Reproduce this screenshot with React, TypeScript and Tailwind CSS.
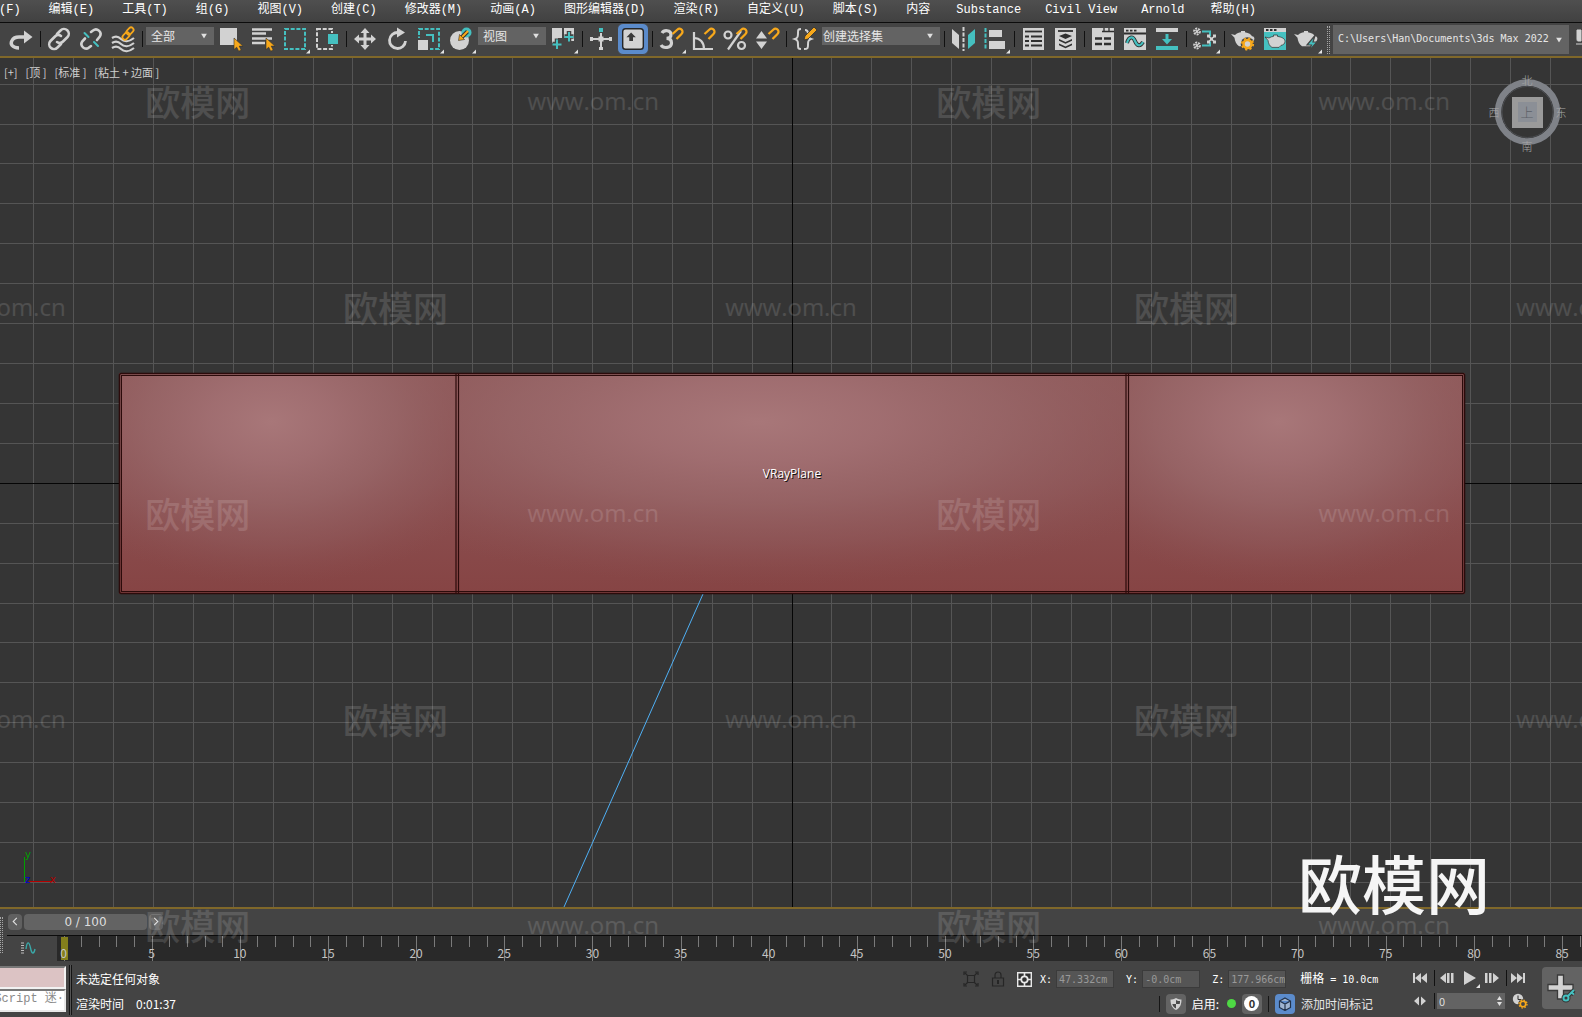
import { useState } from "react";
import type { ReactNode } from "react";
import clsx from "clsx";

const MENUS = [
  "文件(F)",
  "编辑(E)",
  "工具(T)",
  "组(G)",
  "视图(V)",
  "创建(C)",
  "修改器(M)",
  "动画(A)",
  "图形编辑器(D)",
  "渲染(R)",
  "自定义(U)",
  "脚本(S)",
  "内容",
  "Substance",
  "Civil View",
  "Arnold",
  "帮助(H)",
];

const LIGHT = "#d2d2d2";
const TEAL = "#45c0c0";
const ORANGE = "#f7a81b";
const DARK = "#2f2f2f";

const CURSOR = "M19 15v11.500l2.700-2.300 2 4 2.500-1.200-2-3.900h3.700z";
const MAGNET = "M17.500 11l5-4.500a3 3 0 0 1 4 4.500l-5 5";

const ICONS: Record<string, ReactNode> = {
  redo: (
    <>
      <path d="M14 25c-7 0-9-4-7-7.500C8.500 14.500 11 14 14 14h6" fill="none" stroke={LIGHT} strokeWidth="3.400" />
      <path d="M19 7.500l8.500 6.500-8.500 6.500z" fill={LIGHT} />
    </>
  ),
  link: (
    <g fill="none" stroke={LIGHT} strokeWidth="2.600" strokeLinecap="round">
      <path d="M14 11l3.500-3.500a4.600 4.600 0 0 1 7 6.500L20 18.500a4.600 4.600 0 0 1-6 .500" />
      <path d="M18 21l-3.500 3.500a4.600 4.600 0 0 1-7-6.500L12 13.500a4.600 4.600 0 0 1 6-.500" />
    </g>
  ),
  unlink: (
    <g fill="none" strokeWidth="2.600" strokeLinecap="round">
      <path d="M16 9l2-1.500a4.600 4.600 0 0 1 6.800 6L22 17M16 23l-2 1.500a4.600 4.600 0 0 1-6.800-6L10 15.500" stroke={LIGHT} />
      <path d="M9.500 10l4 4M19 19l4 4" stroke={TEAL} strokeWidth="2" />
    </g>
  ),
  bind: (
    <>
      <g fill="none" stroke={LIGHT} strokeWidth="2.200">
        <path d="M5 15c3-2 6-2 9 1s8 3 13-1" />
        <path d="M5 20c3-2 6-2 9 1s8 3 13-1" />
        <path d="M5 25c3-2 6-2 9 1s8 3 13-1" />
      </g>
      <g fill="none" stroke={ORANGE} strokeWidth="1.800">
        <rect x="19" y="5.500" width="8" height="5" rx="2.500" transform="rotate(-45 23 8)" />
        <rect x="15" y="10.500" width="8" height="5" rx="2.500" transform="rotate(-45 19 13)" />
      </g>
    </>
  ),
  selectObject: (
    <>
      <rect x="5" y="5" width="17" height="17" fill={LIGHT} />
      <path d={CURSOR} fill={ORANGE} stroke={DARK} strokeWidth=".6" />
    </>
  ),
  selectByName: (
    <>
      <path d="M5 6.500h20M5 10.500h14M5 15.500h20M5 20h13" stroke={LIGHT} strokeWidth="2.400" />
      <path d={CURSOR} fill={ORANGE} stroke={DARK} strokeWidth=".6" />
    </>
  ),
  rectRegion: <rect x="6" y="6" width="20" height="20" fill="none" stroke={TEAL} strokeWidth="2" strokeDasharray="4 1.700" />,
  windowCrossing: (
    <>
      <rect x="6" y="6" width="15" height="20" fill="none" stroke={LIGHT} strokeWidth="2" strokeDasharray="4 1.700" />
      <rect x="16" y="10" width="12" height="12" fill="#444" />
      <rect x="17" y="11" width="10" height="10" fill={TEAL} />
    </>
  ),
  move: (
    <>
      <path d="M16 8v16M8 16h16" stroke={LIGHT} strokeWidth="3" />
      <path d="M16 5l4.500 5h-9zM16 27l4.500-5h-9zM5 16l5-4.500v9zM27 16l-5-4.500v9z" fill={LIGHT} />
    </>
  ),
  rotate: (
    <>
      <path d="M17 9.500a8 8 0 1 0 7.500 8.500" fill="none" stroke={LIGHT} strokeWidth="2.800" />
      <path d="M16 4.500l8 5-8 5z" fill={LIGHT} />
    </>
  ),
  scale: (
    <>
      <rect x="6" y="6" width="20" height="20" fill="none" stroke={TEAL} strokeWidth="2" strokeDasharray="4 1.700" />
      <rect x="4" y="15" width="13" height="13" fill="#444" />
      <rect x="5" y="17" width="10" height="10" fill={LIGHT} />
      <path d="M13 12h7v7" fill="none" stroke={TEAL} strokeWidth="2" />
    </>
  ),
  place: (
    <>
      <circle cx="14.500" cy="17.500" r="9.500" fill={LIGHT} />
      <circle cx="21.500" cy="9.500" r="5" fill={TEAL} />
      <path d="M22.500 8.500l-6.500 6.500" stroke={DARK} strokeWidth="4" />
      <path d="M23 8l-7 7" stroke={ORANGE} strokeWidth="2.200" />
      <path d="M13.500 17.500l1-6 5 5z" fill={ORANGE} stroke={DARK} strokeWidth=".6" />
    </>
  ),
  pivot: (
    <>
      <path d="M5 5h10v10h-4v5H5zM17 5h10v13h-4v-3h-6z" fill={LIGHT} />
      <path d="M10 15.500v11M5.500 21h9M22 8v11M17.500 13.500h9" stroke="#444" strokeWidth="4.500" />
      <path d="M10 16.500v9.500M5.500 21.500h9M22 9v9.500M17.500 14h9" stroke={TEAL} strokeWidth="2" />
    </>
  ),
  manipulate: (
    <>
      <path d="M16 10v17M7 16h18" stroke={LIGHT} strokeWidth="2" />
      <rect x="14" y="5" width="4" height="4" fill={TEAL} />
      <path d="M5 14h3v4H5zM24 14h3v4h-3zM14 24h4v3h-4zM13.500 13.500h5v5h-5z" fill={LIGHT} />
    </>
  ),
  override: (
    <>
      <rect x="5" y="5" width="22" height="22" rx="3" fill={LIGHT} stroke="#262626" strokeWidth="1.500" />
      <path d="M14 9l5 5h-3v4h-4v-4H9z" fill="#3a3a3a" />
    </>
  ),
  snap: (
    <>
      <path d="M7 10c2-3.500 9-3 9 1.500 0 2.500-2 3.800-4.500 3.800 3 0 5 1.700 5 4.700 0 5-8 6-10.500 2" fill="none" stroke={LIGHT} strokeWidth="3.200" />
      <path d={MAGNET} fill="none" stroke={ORANGE} strokeWidth="2.300" />
    </>
  ),
  angleSnap: (
    <>
      <path d="M7 9v17h19" fill="none" stroke={LIGHT} strokeWidth="2.200" />
      <path d="M7 15c6 0 10 4.500 10 11" fill="none" stroke={LIGHT} strokeWidth="2.200" />
      <path d={MAGNET} fill="none" stroke={ORANGE} strokeWidth="2.300" />
    </>
  ),
  percentSnap: (
    <>
      <circle cx="9" cy="12" r="3.500" fill="none" stroke={LIGHT} strokeWidth="2.200" />
      <circle cx="22.500" cy="22.500" r="3.500" fill="none" stroke={LIGHT} strokeWidth="2.200" />
      <path d="M22 8L9 26.500" stroke={LIGHT} strokeWidth="2.200" />
      <path d={MAGNET} fill="none" stroke={ORANGE} strokeWidth="2.300" />
    </>
  ),
  spinnerSnap: (
    <>
      <path d="M10.500 8l5.500 7.500H5zM10.500 26L5 18.500h11z" fill={LIGHT} />
      <path d={MAGNET} fill="none" stroke={ORANGE} strokeWidth="2.300" />
    </>
  ),
  namedSets: (
    <>
      <path d="M12 6c-3 0-3 1-3 4s0 5-3 6c3 1 3 3 3 6s0 4 3 4" fill="none" stroke={LIGHT} strokeWidth="2" />
      <path d="M16 7c3 0 3 2 3 4s0 4 3 5c-3 1-3 3-3 6s0 4-4 4" fill="none" stroke={LIGHT} strokeWidth="2" />
      <path d="M15 17l1-4 9-9 3 3-9 9z" fill={ORANGE} stroke={DARK} strokeWidth=".8" />
    </>
  ),
  mirror: (
    <>
      <path d="M5 6l7 6v14l-7-6z" fill={LIGHT} />
      <path d="M16.500 4v24" stroke={LIGHT} strokeWidth="2" strokeDasharray="4 1.500" />
      <path d="M28 6l-7 6v14l7-6z" fill={TEAL} />
    </>
  ),
  align: (
    <>
      <path d="M6.500 5v22" stroke={TEAL} strokeWidth="2" strokeDasharray="4 1.500" />
      <path d="M10 7h13v7H10zM10 18h16v8H10z" fill={LIGHT} />
    </>
  ),
  sceneExplorer: (
    <>
      <rect x="6" y="5" width="21" height="22" fill={LIGHT} />
      <path d="M8 8.500h17" stroke={DARK} strokeWidth="1.800" />
      <path d="M8 13.500h4M14 13.500h11M8 18h4M14 18h11M8 22.500h4M14 22.500h11" stroke={DARK} strokeWidth="2" />
    </>
  ),
  layerExplorer: (
    <>
      <rect x="6" y="5" width="21" height="22" fill={LIGHT} />
      <path d="M9 8h15" stroke={DARK} strokeWidth="1.800" />
      <path d="M16.500 10.500l6.500 2.500-6.500 3-6.500-3zM10 16l6.500 3 6.500-3v1.800l-6.500 3-6.500-3zM10 20.500l6.500 3 6.500-3v1.800l-6.500 3-6.500-3z" fill={DARK} />
    </>
  ),
  ribbon: (
    <>
      <rect x="5" y="5" width="22" height="22" fill={LIGHT} />
      <path d="M15 8.500h12M17 5v3M22 5v3" stroke={DARK} strokeWidth="1.300" />
      <path d="M8 15.500h7M17 15.500h7M8 21h7M17 21h7" stroke={DARK} strokeWidth="2.600" />
    </>
  ),
  curveEditor: (
    <>
      <rect x="5" y="5" width="22" height="22" fill={LIGHT} />
      <path d="M5 10.500h22M7 7.700h2.500M11 7.700h2.500M15 7.700h2.500" stroke={DARK} strokeWidth="1.800" />
      <path d="M8 20c2-7 6-7 8-2s5 6 8 1" fill="none" stroke={DARK} strokeWidth="4" />
      <path d="M8 20c2-7 6-7 8-2s5 6 8 1" fill="none" stroke={TEAL} strokeWidth="2.200" />
    </>
  ),
  dopeSheet: (
    <>
      <rect x="5" y="5" width="22" height="4" fill={LIGHT} />
      <path d="M14.500 11h3v5H21l-5 5.500-5-5.500h3.500zM5 23h22v4H5z" fill={TEAL} />
    </>
  ),
  schematic: (
    <>
      <path d="M13 8.500h8v5M13 22.500h8v-4" fill="none" stroke={TEAL} strokeWidth="2" />
      <g fill="none" stroke={LIGHT} strokeWidth="1.800" strokeDasharray="2 1">
        <circle cx="8" cy="8.500" r="3" />
        <circle cx="8" cy="22.500" r="3" />
      </g>
      <path d="M6.500 7l3 3M9.500 7l-3 3M6.500 21l3 3M9.500 21l-3 3M19.500 13l6 6M25.500 13l-6 6" stroke={LIGHT} strokeWidth="1.500" />
      <path d="M18 11.500h3v3h-3zM24 11.500h3v3h-3zM18 17.500h3v3h-3zM24 17.500h3v3h-3zM21 14.500h3v3h-3z" fill={LIGHT} />
    </>
  ),
  renderSetup: (
    <>
      <path d="M4 11l4 1c2-2 4-2.500 6-2.800V8h4v1.200c4 .8 6 2 7 4 2 0 3 2 2 4l-4 6H12c-3-2-4-5-4.500-8.500z" fill={LIGHT} />
      <circle cx="20.500" cy="21" r="6.800" fill="#444" />
      <circle cx="20.500" cy="21" r="4" fill={LIGHT} stroke={ORANGE} strokeWidth="2.600" />
      <circle cx="20.500" cy="21" r="5.700" fill="none" stroke={ORANGE} strokeWidth="1.800" strokeDasharray="2.200 2.280" />
    </>
  ),
  renderFrame: (
    <>
      <rect x="5" y="5" width="22" height="22" fill={TEAL} />
      <path d="M5 5h22v4H5z" fill={LIGHT} />
      <path d="M7 7h2.500M11 7h2.500M15 7h2.500" stroke={DARK} strokeWidth="1.800" />
      <path d="M6 14l4 1c1.500-1 3-1.500 4.500-1.600v-1.400h4v1.400c4 .6 7.500 2 7.500 5 0 2.500-2 3.600-4 4l-2 2h-7c-3-1.500-3.500-4.500-4-7z" fill={LIGHT} stroke={DARK} strokeWidth=".7" />
    </>
  ),
  render: (
    <>
      <path d="M3 11l4 1c2-2 4-2.500 6-2.800V8h4v1.200c4 .8 6 2 7 4 2 0 3 2 2 4l-4 6H11c-3-2-4-5-4.500-8.500z" fill={LIGHT} />
      <path d="M24 12.500l-8 9.500h4.500l-3 6.500 8.500-9.500h-4z" fill={TEAL} stroke="#444" strokeWidth="1.200" />
    </>
  ),
};

type ToolProps = {
  icon: string;
  label: string;
  flyout?: boolean;
  active?: boolean;
};

function Tool({ icon, label, flyout, active }: ToolProps) {
  return (
    <button
      type="button"
      aria-label={label}
      className={clsx("h-8 w-8 shrink-0", active && "rounded-md border border-[#444] bg-[#5b8bcb]")}
    >
      <svg viewBox="0 0 32 32" className="h-full w-full">
        {ICONS[icon]}
        {flyout && <path d="M31 26.500v4h-4z" fill="#e4e4e4" />}
      </svg>
    </button>
  );
}

function Separator() {
  return (
    <div className="flex h-8 w-[6px] shrink-0 items-center justify-center">
      <div className="h-4 w-px bg-[#111]" />
    </div>
  );
}

type DropDownProps = {
  label: string;
  options: string[];
  className: string;
  inset?: string;
};

function DropDown({ label, options, className, inset = "pl-[5px]" }: DropDownProps) {
  return (
    <div className={clsx("relative mx-px shrink-0", className)}>
      <select
        aria-label={label}
        className={clsx(
          "block h-full w-full appearance-none bg-[#636363] pb-px pr-5 text-[#e6e6e6] outline-none",
          inset,
        )}
      >
        {options.map((option) => (
          <option key={option}>{option}</option>
        ))}
      </select>
      <svg viewBox="0 0 6 5" className="pointer-events-none absolute right-[7px] top-1/2 h-[5px] w-[6px] -translate-y-1/2">
        <path d="M0 0h6L3 5z" fill="#e0e0e0" />
      </svg>
    </div>
  );
}

function MenuBar() {
  return (
    <nav className="h-[23px] overflow-hidden border-b border-[#0c0c0c] bg-linear-to-b from-[#4f4f4f] to-[#414141] font-['Liberation_Mono','Noto_Sans_CJK_SC',monospace] text-xs text-white">
      <div className="-ml-[39px] flex h-5 items-center">
        {MENUS.map((menu) => (
          <button
            key={menu}
            type="button"
            className={clsx("shrink-0 whitespace-nowrap", /^[A-Z]/.test(menu) ? "px-3" : "px-[14px]")}
          >
            {menu}
          </button>
        ))}
      </div>
    </nav>
  );
}

function Toolbar() {
  return (
    <div className="flex h-[33px] items-start overflow-hidden bg-[#444] pl-[5px] font-['Noto_Sans_CJK_SC',sans-serif] text-xs">
      <Tool icon="redo" label="重做" />
      <Separator />
      <Tool icon="link" label="选择并链接" />
      <Tool icon="unlink" label="取消链接" />
      <Tool icon="bind" label="绑定到空间扭曲" />
      <Separator />
      <DropDown label="选择过滤器" options={["全部", "几何体", "灯光"]} className="mt-1 h-[18px] w-[68px]" />
      <Tool icon="selectObject" label="选择对象" />
      <Tool icon="selectByName" label="按名称选择" />
      <Tool icon="rectRegion" label="矩形选择区域" flyout />
      <Tool icon="windowCrossing" label="窗口/交叉" />
      <Separator />
      <Tool icon="move" label="选择并移动" />
      <Tool icon="rotate" label="选择并旋转" />
      <Tool icon="scale" label="选择并缩放" flyout />
      <Tool icon="place" label="选择并放置" flyout />
      <DropDown label="参考坐标系" options={["视图", "屏幕", "世界"]} className="mt-1 h-[18px] w-[68px]" />
      <Tool icon="pivot" label="使用轴点中心" flyout />
      <Separator />
      <Tool icon="manipulate" label="选择并操纵" />
      <Tool icon="override" label="键盘快捷键覆盖切换" active />
      <Separator />
      <Tool icon="snap" label="捕捉开关" flyout />
      <Tool icon="angleSnap" label="角度捕捉切换" />
      <Tool icon="percentSnap" label="百分比捕捉切换" />
      <Tool icon="spinnerSnap" label="微调器捕捉切换" />
      <Separator />
      <Tool icon="namedSets" label="编辑命名选择集" />
      <DropDown label="命名选择集" options={["创建选择集"]} className="mt-1 h-[18px] w-[118px]" inset="pl-px" />
      <Separator />
      <Tool icon="mirror" label="镜像" />
      <Tool icon="align" label="对齐" flyout />
      <Separator />
      <Tool icon="sceneExplorer" label="切换场景资源管理器" />
      <Tool icon="layerExplorer" label="切换层资源管理器" />
      <Separator />
      <Tool icon="ribbon" label="显示功能区" />
      <Tool icon="curveEditor" label="曲线编辑器" />
      <Tool icon="dopeSheet" label="摄影表" />
      <Separator />
      <Tool icon="schematic" label="图解视图" flyout />
      <Separator />
      <Tool icon="renderSetup" label="渲染设置" />
      <Tool icon="renderFrame" label="渲染帧窗口" />
      <Tool icon="render" label="渲染产品" flyout />
      <div className="ml-1 mr-[2px] mt-[3px] h-7 w-[3px] shrink-0 border-x border-dotted border-[#a5a5a5]" />
      <DropDown
        label="项目文件夹"
        options={["C:\\Users\\Han\\Documents\\3ds Max 2022"]}
        className="mt-[2px] h-[29px] w-[236px] font-['DejaVu_Sans_Mono',monospace] text-[10px]"
      />
      <button type="button" aria-label="设置项目" className="ml-1 mt-1 h-6 w-6 shrink-0">
        <svg viewBox="0 0 24 24">
          <path d="M3 3h4v11H4c-1 0-1-1-1-2zM2 17h6" stroke={LIGHT} fill={LIGHT} />
        </svg>
      </button>
    </div>
  );
}

const CENTER = { x: 792.05, y: 425.3 };
const GRID_STEP = 39.92;
const GRID_STEPS = Array.from({ length: 41 }, (_, i) => i - 20).filter((n) => n !== 0);

const PLANES = [
  { x: 119, width: 338 },
  { x: 457, width: 670 },
  { x: 1127, width: 338 },
];

function ViewCube() {
  return (
    <g className="font-['Noto_Sans_CJK_SC',sans-serif] text-[11px]" textAnchor="middle">
      <circle cx="1527.500" cy="54" r="29.500" fill="none" stroke="#7f8288" strokeWidth="6.500" />
      <circle cx="1527.500" cy="54" r="25.500" fill="#353535" stroke="#4b4d51" />
      <rect x="1512" y="39" width="31" height="31" fill="#9a9a9a" />
      <rect x="1518" y="44" width="19" height="20" fill="#8b8f96" />
      <text x="1527" y="59" fill="#5c5f66" className="text-[13px] font-light">
        上
      </text>
      <g fill="#a8a8a8" className="font-light">
        <text x="1527" y="27">北</text>
        <text x="1527" y="93">南</text>
        <text x="1494" y="59">西</text>
        <text x="1561" y="59">东</text>
      </g>
    </g>
  );
}

function Viewport() {
  return (
    <main className="relative min-h-0 flex-1 overflow-hidden border-y-2 border-[#80682a] bg-[#353535]">
      <svg viewBox="0 0 1582 849" preserveAspectRatio="xMidYMid slice" className="block h-full w-full">
        <defs>
          <linearGradient id="clay" x1="0" y1="0" x2="0" y2="1">
            <stop offset="0" stopColor="#8f5a5a" />
            <stop offset=".5" stopColor="#8c5152" />
            <stop offset="1" stopColor="#864444" />
          </linearGradient>
          <radialGradient id="glow" cx=".45" cy=".22" r=".74">
            <stop offset="0" stopColor="#a87779" />
            <stop offset=".25" stopColor="#a27073" stopOpacity=".9" />
            <stop offset=".5" stopColor="#99686a" stopOpacity=".75" />
            <stop offset=".75" stopColor="#925e60" stopOpacity=".45" />
            <stop offset="1" stopColor="#8c5253" stopOpacity="0" />
          </radialGradient>
        </defs>

        <g stroke="#555" shapeRendering="crispEdges">
          {GRID_STEPS.map((n) => (
            <path key={n} d={`M${Math.floor(CENTER.x + n * GRID_STEP) + 0.5} 0V849`} />
          ))}
          {GRID_STEPS.filter((n) => Math.abs(n) < 11).map((n) => (
            <path key={n} d={`M0 ${Math.floor(CENTER.y + n * GRID_STEP) + 0.5}H1582`} />
          ))}
          <path d="M792.5 0V849M0 425.5H1582" stroke="#050505" />
        </g>

        <path d="M703 536L564 849" stroke="#4fb0f5" />

        {PLANES.map((plane) => (
          <g key={plane.x}>
            <rect x={plane.x} y="315" width={plane.width} height="221" fill="url(#clay)" />
            <rect x={plane.x} y="315" width={plane.width} height="221" fill="url(#glow)" />
          </g>
        ))}
        <g fill="none" stroke="#2c0b0b">
          <rect x="119.500" y="315.500" width="1345" height="220" rx="1.500" strokeWidth="1.600" />
          <rect x="121.500" y="317.500" width="1341" height="216" />
          <path d="M456 316v219M458.500 316v219M1126 316v219M1128.500 316v219" strokeWidth="1.200" />
        </g>

        <g className="font-['Open_Sans',sans-serif] text-xs" textAnchor="middle">
          <text x="793" y="421" fill="#111" aria-hidden="true">
            VRayPlane
          </text>
          <text x="792" y="420" fill="#fff">
            VRayPlane
          </text>
        </g>

        <g className="font-['DejaVu_Sans',sans-serif] text-[10px]" shapeRendering="crispEdges">
          <path d="M24.500 799v25" stroke="#00a000" />
          <path d="M29 823.500h23" stroke="#b40000" />
          <text x="25" y="800" fill="#00a000">y</text>
          <text x="50" y="825" fill="#b40000">x</text>
          <text x="25" y="825" fill="#0000c8">z</text>
        </g>

        <ViewCube />
      </svg>

      <div className="absolute left-1 top-[6px] flex gap-2 font-['Noto_Sans_CJK_SC',sans-serif] text-[11px] leading-4 text-[#cfcfcf]">
        <button type="button">[+]</button>
        <button type="button">[顶 ]</button>
        <button type="button">[标准 ]</button>
        <button type="button">[粘土 + 边面 ]</button>
      </div>
    </main>
  );
}

const FRAME_STEP = 17.63;
const RULER_WIDTH = 1525;

function TrackBar() {
  const frames = Array.from({ length: 87 }, (_, i) => i);
  const toPercent = (x: number) => `${(x / RULER_WIDTH) * 100}%`;

  return (
    <section className="flex h-[52px] bg-[#444]">
      <div className="my-2 mr-1 w-[3px] shrink-0 border-x border-dotted border-[#a5a5a5]" />
      <div className="flex min-w-0 flex-1 flex-col">
        <div className="flex h-[26px] items-center gap-[2px] pb-px pl-px font-['DejaVu_Sans',sans-serif] text-xs text-[#dedede]">
          <button type="button" aria-label="上一帧" className="flex h-4 w-[14px] items-center justify-center rounded-sm bg-[#606060]">
            <svg viewBox="0 0 6 10" className="h-[9px] w-[6px]">
              <path d="M5 1L1 5l4 4" fill="none" stroke="#e0e0e0" strokeWidth="1.200" />
            </svg>
          </button>
          <button type="button" className="h-4 w-[123px] rounded-sm bg-[#636363] leading-4">
            0 / 100
          </button>
          <button type="button" aria-label="下一帧" className="flex h-4 w-[14px] items-center justify-center rounded-sm bg-[#606060]">
            <svg viewBox="0 0 6 10" className="h-[9px] w-[6px]">
              <path d="M1 1l4 4-4 4" fill="none" stroke="#e0e0e0" strokeWidth="1.200" />
            </svg>
          </button>
        </div>
        <div className="flex h-[26px] border-t border-[#0c0c0c]">
          <button type="button" aria-label="打开迷你曲线编辑器" className="flex w-[50px] shrink-0 items-center justify-center pb-[2px] pr-2">
            <svg viewBox="0 0 16 12" className="h-3 w-4">
              <path d="M1 1h3M1 3.500h3M1 6h3M1 8.500h3M1 11h3" stroke="#bdbdbd" />
              <path d="M6 7c1-8 3-8 4.500-1s3.500 6 4.500 1" fill="none" stroke="#3aa9a9" strokeWidth="1.400" />
            </svg>
          </button>
          <svg className="h-[25px] min-w-0 flex-1 bg-[#292929]" shapeRendering="crispEdges">
            {frames.map((frame) => {
              const x = toPercent(7 + frame * FRAME_STEP);
              return <line key={frame} x1={x} x2={x} y1="0" y2={frame % 5 === 0 ? 25 : 11} stroke="#7a7a7a" />;
            })}
            <rect x={toPercent(4)} y="1" width="7" height="23" fill="#84801c" />
            <g className="font-['Noto_Sans_CJK_SC',sans-serif] text-xs" fill="#c4c4c4" textAnchor="middle">
              {frames
                .filter((frame) => frame % 5 === 0)
                .map((frame) => (
                  <text key={frame} x={toPercent(6.5 + frame * FRAME_STEP)} y="22">
                    {frame}
                  </text>
                ))}
            </g>
          </svg>
        </div>
      </div>
    </section>
  );
}

function CoordinateField({ axis, initial }: { axis: string; initial: string }) {
  const [value, setValue] = useState(initial);
  return (
    <label className="flex items-center gap-1 text-white">
      {axis}:
      <input
        value={value}
        onChange={(event) => setValue(event.target.value)}
        className="h-[18px] w-[58px] border border-[#3b3b3b] bg-[#555] pl-[2px] text-[#999] outline-none"
      />
    </label>
  );
}

type TransportProps = {
  label: string;
  path: string;
  flyout?: boolean;
};

function Transport({ label, path, flyout }: TransportProps) {
  return (
    <button type="button" aria-label={label} className="h-5 w-[22px] shrink-0">
      <svg viewBox="0 0 22 20">
        <path d={path} fill={LIGHT} />
        {flyout && <path d="M21 16v4h-4z" fill="#e4e4e4" />}
      </svg>
    </button>
  );
}

function StatusBar() {
  const [frame, setFrame] = useState(0);

  return (
    <footer className="flex h-14 overflow-hidden bg-[#444] font-['Noto_Sans_CJK_SC',sans-serif] text-xs text-white">
      <div className="mt-[5px] flex w-[66px] shrink-0 flex-col">
        <input aria-label="宏录制器" className="h-[23px] w-full border-2 border-l-0 border-t-[#777] border-[#f2f2f2] bg-[#dcc3c4] outline-none" />
        <div className="flex h-[23px] justify-end overflow-hidden border-2 border-l-0 border-t-[#777] border-[#e8e8e8] bg-white">
          <input
            aria-label="侦听器"
            defaultValue="MAXScript 迷·"
            className="mb-1 w-[120px] shrink-0 text-right font-['Liberation_Mono','Noto_Sans_CJK_SC',monospace] text-[#8a8a8a] outline-none"
          />
        </div>
      </div>
      <div className="ml-[3px] mt-1 h-[50px] w-[3px] shrink-0 border-x border-[#141414] bg-[#555]" />

      <div className="ml-1 grid min-w-0 flex-1 grid-rows-2 items-center pb-px pt-[6px]">
        <p>未选定任何对象</p>
        <p className="flex gap-3">
          渲染时间 <span>0:01:37</span>
        </p>
      </div>

      <div className="grid w-[417px] shrink-0 grid-rows-2 items-center pb-px pt-[6px]">
        <div className="flex items-center font-['DejaVu_Sans_Mono','Noto_Sans_CJK_SC',monospace] text-[10px]">
          <button type="button" aria-label="孤立当前选择" className="mr-3">
            <svg viewBox="0 0 16 16" className="h-4 w-4" fill="none" stroke="#262626" strokeWidth="1.200">
              <path d="M1 4V1h3M12 1h3v3M15 12v3h-3M4 15H1v-3M4.500 4.500h7v7h-7zM2 2l3 3M14 2l-3 3M14 14l-3-3M2 14l3-3" />
            </svg>
          </button>
          <button type="button" aria-label="选择锁定切换" className="mr-3">
            <svg viewBox="0 0 14 16" className="h-4 w-[14px]" fill="none" stroke="#262626" strokeWidth="1.200">
              <path d="M1.500 7h11v8h-11zM4 7V4c0-4 6-4 6 0v3" />
              <path d="M7 9v4M6 10h2" strokeWidth="2" />
            </svg>
          </button>
          <button type="button" aria-label="绝对模式变换输入" className="mr-2">
            <svg viewBox="0 0 15 15" className="h-[15px] w-[15px]">
              <path d="M.7.700h13.600v13.600H.7z" fill="#303030" stroke="#e8e8e8" strokeWidth="1.400" />
              <circle cx="7.500" cy="7.500" r="3.200" fill="none" stroke="#e8e8e8" strokeWidth="1.800" />
              <path d="M7.500 1v3M7.500 11v3M1 7.500h3M11 7.500h3" stroke="#e8e8e8" strokeWidth="1.600" />
            </svg>
          </button>
          <div className="flex gap-3">
            <CoordinateField axis="X" initial="47.332cm" />
            <CoordinateField axis="Y" initial="-0.0cm" />
            <CoordinateField axis="Z" initial="177.966cm" />
          </div>
          <p className="ml-[14px] flex items-center gap-[6px] whitespace-nowrap">
            <span className="text-xs">栅格</span> = 10.0cm
          </p>
        </div>

        <div className="flex items-center justify-end pr-[7px]">
          <div className="mr-[6px] h-4 w-px bg-[#161616]" />
          <button type="button" aria-label="安全" className="flex h-5 w-5 items-center justify-center rounded-sm bg-[#636363]">
            <svg viewBox="0 0 14 14" className="h-[14px] w-[14px]">
              <path d="M7 1c2 1.500 4 1.500 5.500 1.500 0 5-1.500 8.500-5.500 10.500C3 11 1.500 7.500 1.500 2.500 3 2.500 5 2.500 7 1z" fill={LIGHT} />
              <path d="M7 3c1.500 1 2.500 1 4 1 0 1 0 2-.300 3H7zM7 7v4.500C5 10.500 3.800 9 3.300 7z" fill="#4a4a4a" />
            </svg>
          </button>
          <span className="ml-[6px] mr-2">启用:</span>
          <span className="mr-[6px] h-[9px] w-[9px] rounded-full bg-[#4ed944]" />
          <button type="button" className="flex h-5 w-5 items-center justify-center rounded-sm bg-[#636363]">
            <span className="h-[15px] w-[15px] rounded-full bg-white text-[11px] font-bold leading-[15px] text-[#333]">0</span>
          </button>
          <div className="mx-[6px] h-4 w-px bg-[#161616]" />
          <button type="button" aria-label="时间标记" className="mr-[6px] flex h-5 w-5 items-center justify-center rounded-sm bg-[#5b8bcb]">
            <svg viewBox="0 0 14 14" className="h-[14px] w-[14px]" fill="#9fb4d0" stroke="#22324a" strokeWidth="1.200">
              <path d="M7 1l5.500 3v6.500L7 13.500 1.500 10.500V4zM1.500 4L7 7l5.500-3M7 7v6.500" />
            </svg>
          </button>
          <button type="button" className="text-[#e6e6e6]">
            添加时间标记
          </button>
        </div>
      </div>

      <div className="ml-[29px] grid w-[122px] shrink-0 grid-rows-2 items-center py-[5px]">
        <div className="flex items-center">
          <Transport label="转至开头" path="M4 5h2v10H4zM12 5v10l-6-5zM18 5v10l-6-5z" />
          <Separator />
          <Transport label="上一帧" path="M9 5v10l-6-5zM10 5h2.500v10H10zM14 5h2.500v10H14z" />
          <Transport label="播放动画" path="M5 3l12 7-12 7z" flyout />
          <Transport label="下一帧" path="M4 5h2.500v10H4zM8 5h2.500v10H8zM12 5v10l6-5z" />
          <Separator />
          <Transport label="转至结尾" path="M2 5v10l6-5zM8 5v10l6-5zM14 5h2v10h-2z" />
        </div>
        <div className="flex items-center">
          <Transport label="关键点模式切换" path="M10 5.500v9l-5-4.500zM12 5.500v9l5-4.500z" />
          <Separator />
          <div className="relative h-4 w-[68px] shrink-0">
            <input
              aria-label="当前帧"
              value={frame}
              onChange={(event) => setFrame(Number(event.target.value) || 0)}
              className="block h-full w-full bg-[#636363] pl-[2px] text-[11px] text-[#dedede] outline-none"
            />
            <svg viewBox="0 0 5 10" className="pointer-events-none absolute right-[3px] top-[3px] h-[10px] w-[5px]">
              <path d="M2.500 0L5 4H0zM2.500 10L0 6h5z" fill="#e0e0e0" />
            </svg>
          </div>
          <button type="button" aria-label="时间配置" className="ml-[7px] shrink-0">
            <svg viewBox="0 0 16 16" className="h-4 w-4">
              <circle cx="6" cy="6" r="5.200" fill={LIGHT} />
              <path d="M6 2.500V6.500h3" fill="none" stroke={DARK} />
              <circle cx="11" cy="11" r="4.800" fill="#444" />
              <circle cx="11" cy="11" r="2.700" fill="#444" stroke={ORANGE} strokeWidth="1.600" />
              <circle cx="11" cy="11" r="4" fill="none" stroke={ORANGE} strokeWidth="1.300" strokeDasharray="1.500 1.640" />
            </svg>
          </button>
        </div>
      </div>

      <button type="button" aria-label="设置关键点" className="ml-[11px] mt-[6px] h-[42px] w-10 shrink-0 rounded-l-sm bg-[#636363]">
        <svg viewBox="0 0 40 42">
          <path d="M15.500 8h6v9.500H31v6h-9.500V32h-6v-8.500H6v-6h9.500z" fill={LIGHT} stroke="#3a3a3a" strokeWidth="1.300" />
          <g fill="none" stroke="#333" strokeWidth="4">
            <circle cx="24" cy="31" r="2.500" />
            <path d="M26 29l6-6M29.500 25.500l2.500 2" />
          </g>
          <g fill="none" stroke={TEAL} strokeWidth="2">
            <circle cx="24" cy="31" r="2.500" />
            <path d="M26 29l6-6M29.500 25.500l2.500 2" />
          </g>
        </svg>
      </button>
    </footer>
  );
}

function Watermark({ text }: { text: string }) {
  return (
    <span
      className={clsx(
        "whitespace-nowrap text-center text-white/13",
        text.startsWith("w")
          ? "font-['Open_Sans',sans-serif] text-[24px] font-medium"
          : "font-['Noto_Sans_CJK_SC',sans-serif] text-[35px] font-medium",
      )}
    >
      {text}
    </span>
  );
}

const LOGO = "欧模网";
const SITE = "www.om.cn";

function WatermarkLayer() {
  return (
    <div className="pointer-events-none absolute inset-0 overflow-hidden" aria-hidden="true">
      {[0, 1, 2, 3, 4].map((row) => {
        const shifted = row % 2 === 1;
        const items = shifted ? [SITE, LOGO, SITE, LOGO, SITE] : [LOGO, SITE, LOGO, SITE];
        return (
          <div
            key={row}
            className={clsx("grid h-[206px] items-center pb-1", shifted ? "-mx-[12.5%] grid-cols-5" : "grid-cols-4")}
          >
            {items.map((item, i) => (
              <Watermark key={i} text={item} />
            ))}
          </div>
        );
      })}
      <span className="absolute bottom-[104px] right-[92px] font-['Noto_Sans_CJK_SC',sans-serif] text-[64px] font-medium leading-[64px] text-[#f5f5f5]">
        {LOGO}
      </span>
    </div>
  );
}

export default function App() {
  return (
    <div className="relative flex h-screen flex-col overflow-hidden bg-[#444]">
      <MenuBar />
      <Toolbar />
      <Viewport />
      <TrackBar />
      <StatusBar />
      <WatermarkLayer />
    </div>
  );
}
